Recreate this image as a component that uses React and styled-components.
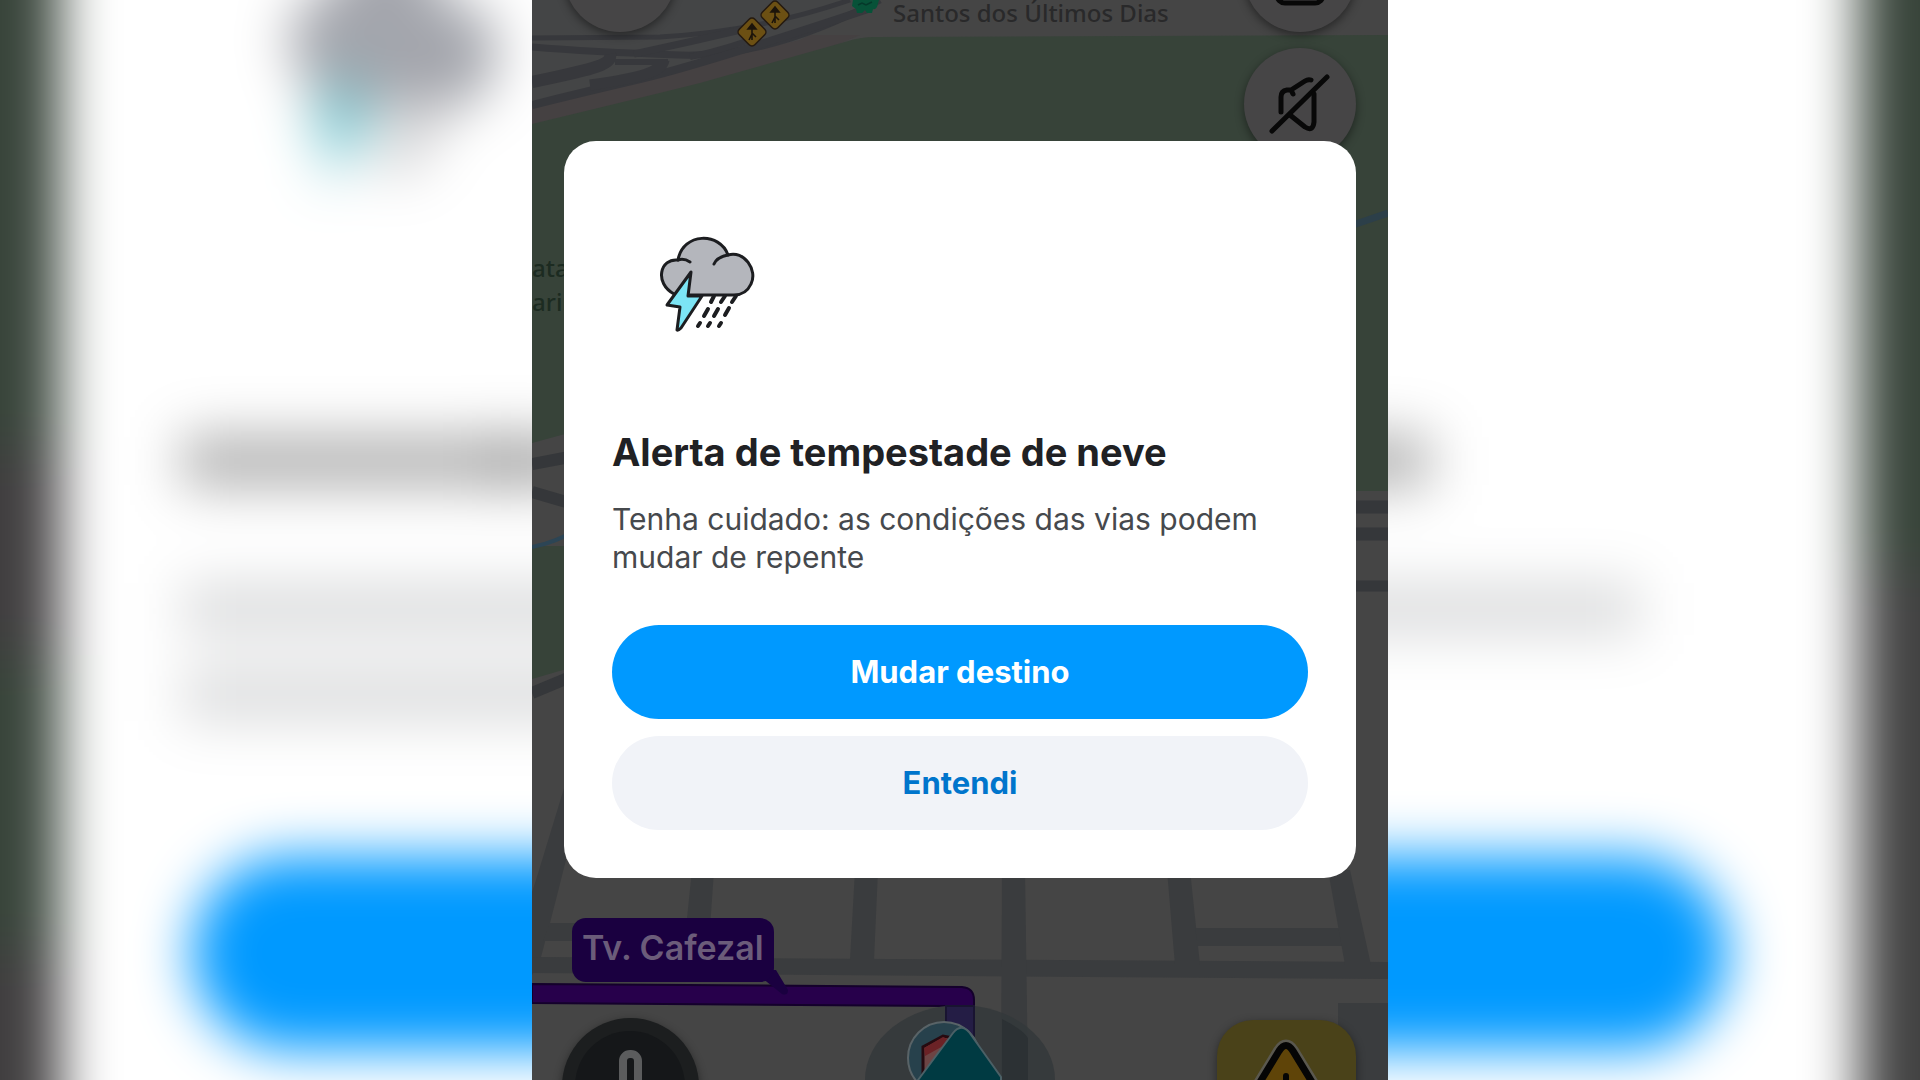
import React from "react";
import styled, { createGlobalStyle } from "styled-components";

const GlobalStyle = createGlobalStyle`
  *, *::before, *::after { box-sizing: border-box; }
  body {
    margin: 0;
    background: #fff;
    font-family: Inter, "Liberation Sans", sans-serif;
  }
`;

const Page = styled.main`
  position: relative;
  display: flex;
  justify-content: center;
  min-height: 100vh;
  overflow: hidden;
`;

const Backdrop = styled.svg`
  position: absolute;
  inset: 0;
  width: 100%;
  height: 100%;
`;

const Blurred = styled.g`
  filter: blur(${(p) => p.$radius}px);
`;

const Phone = styled.section`
  position: relative;
  width: 100%;
  max-width: 856px;
  min-height: 100vh;
  padding: 141px 32px 48px;
  overflow: hidden;
  background: #444544;
`;

const MapDrawing = styled.svg`
  position: absolute;
  top: 0;
  left: 0;
  width: 856px;
  height: 1080px;
`;

const MapLabel = styled.span`
  position: absolute;
  left: ${(p) => p.$x}px;
  top: ${(p) => p.$y}px;
  color: ${(p) => p.$color};
  font: 500 24px/32px "Noto Sans", sans-serif;
  white-space: nowrap;
`;

const StreetTag = styled.span`
  position: absolute;
  left: 40px;
  top: 918px;
  padding: 10px 10px 14px;
  border-radius: 14px;
  background: #1a0040;
  color: #6b5c7a;
  font-size: 34px;
  font-weight: 600;
  line-height: 40px;
  white-space: nowrap;
`;

const MapButton = styled.button`
  position: absolute;
  left: ${(p) => p.$x}px;
  top: ${(p) => p.$y}px;
  width: ${(p) => p.$size}px;
  height: ${(p) => p.$size}px;
  padding: 0;
  border: 0;
  border-radius: ${(p) => p.$radius || "50%"};
  background: ${(p) => p.$fill || "#464546"};
  box-shadow: 0 3px 10px rgba(0, 0, 0, 0.45);

  svg {
    display: block;
    width: 100%;
    height: 100%;
  }
`;

const Dialog = styled.div`
  position: relative;
  display: flex;
  flex-direction: column;
  padding: 48px;
  border-radius: 32px;
  background: #fff;
`;

const StormIcon = styled.svg`
  width: 192px;
  height: 192px;
`;

const Title = styled.h1`
  margin: 47px 0 0;
  color: #202124;
  font-size: 38px;
  font-weight: 700;
  line-height: 48px;
`;

const Message = styled.p`
  margin: 24px 0 0;
  color: #46494d;
  font-size: 30px;
  line-height: 38px;
`;

const Actions = styled.div`
  display: flex;
  flex-direction: column;
  gap: 17px;
  margin-top: 49px;
`;

const Action = styled.button`
  height: 94px;
  border: 0;
  border-radius: 47px;
  background: ${(p) => (p.$primary ? "#0099ff" : "#f1f3f8")};
  color: ${(p) => (p.$primary ? "#ffffff" : "#0075cc")};
  font-family: inherit;
  font-size: 31px;
  font-weight: 700;
  line-height: 40px;
  cursor: pointer;
`;

function BlurredBackdrop() {
  return (
    <Backdrop viewBox="0 0 1920 1080" preserveAspectRatio="xMidYMid slice" aria-hidden="true">
      <Blurred $radius={27}>
        <rect x="-200" y="-200" width="2320" height="1500" fill="#38443a" />
        <rect x="-200" y="450" width="500" height="205" fill="#403e3f" />
        <rect x="-200" y="950" width="500" height="400" fill="#403e3f" />
        <rect x="1700" y="570" width="500" height="800" fill="#424242" />
        <rect x="60" y="-200" width="1800" height="1600" fill="#fff" />
        <path d="M289 50 Q289 0 330 -10 Q350 -60 390 -60 Q430 -60 448 5 Q497 0 497 55 Q492 106 450 106 H320 Z" fill="#a3a5ac" />
        <path d="M400 100 H465 L415 175 H370 Z" fill="#d6d6d8" />
        <path d="M358 55 L302 130 L330 134 L324 190 L382 108 H350 Z" fill="#74c6d0" />
        <rect x="182" y="435" width="330" height="52" fill="#000" opacity=".31" />
        <rect x="500" y="435" width="930" height="52" fill="#000" opacity=".31" />
        <rect x="182" y="582" width="1458" height="54" fill="#3c4448" opacity=".18" />
        <rect x="182" y="668" width="460" height="54" fill="#3c4448" opacity=".18" />
        <rect x="192" y="856" width="1536" height="194" rx="97" fill="#0099ff" />
      </Blurred>
    </Backdrop>
  );
}

function LaneSign({ x, y }) {
  return (
    <g transform={`translate(${x} ${y})`}>
      <rect x="-11" y="-11" width="22" height="22" rx="4" transform="rotate(45)" fill="#6c5013" stroke="#251a10" strokeWidth="1.5" />
      <path d="M0 8 V-7 M-4 -3 L0 -8 L4 -3 Z M0 1 L4 5 M0 2 L-3 8" fill="#1c140b" stroke="#1c140b" strokeWidth="1.6" />
    </g>
  );
}

function RoadMap() {
  return (
    <MapDrawing viewBox="532 0 856 1080" aria-hidden="true">
      <rect x="532" width="856" height="1080" fill="#454545" />

      {/* highway junction */}
      <path d="M532 35 H860 L800 60 L640 99 L532 124 Z" fill="#454142" />
      <path d="M532 0 H880 L800 40 L660 72 L532 106 Z" fill="#444546" />
      <g fill="none" stroke="#37383c">
        <path d="M532 38 L660 37 Q760 31 850 0" strokeWidth="5" />
        <path d="M532 47 Q590 52 680 55 T880 0" strokeWidth="7" />
        <path d="M532 82 C600 68 612 64 610 54" strokeWidth="12" />
        <path d="M532 105 Q580 93 640 79 T868 9" strokeWidth="8" />
        <path d="M590 85 C640 78 662 72 664 60" strokeWidth="11" />
        <path d="M634 54 Q690 42 745 29" strokeWidth="7" />
        <path d="M690 57 Q730 48 760 36" strokeWidth="6" />
        <path d="M615 62 H668" strokeWidth="6" />
      </g>

      {/* parks */}
      <path d="M532 124 Q640 98 700 83 L845 42 Q860 37 875 37 L1388 35 V491 H1340 L565 434 L532 443 Z" fill="#374339" />
      <path d="M532 546 L580 546 V665 L532 679 Z" fill="#374339" />
      <path d="M1350 226 L1388 213" stroke="#2c3f49" strokeWidth="7" />
      <path d="M532 547 Q555 543 580 528" fill="none" stroke="#2c4555" strokeWidth="4" />

      {/* roads either side of the dialog */}
      <g fill="none" stroke="#35373a">
        <path d="M532 464 L580 455" strokeWidth="12" />
        <path d="M532 492 L580 506" strokeWidth="12" />
        <path d="M532 693 L580 673" strokeWidth="12" />
        <path d="M1340 507 H1388 M1340 534 H1388" strokeWidth="13" />
        <path d="M1340 586 H1388" strokeWidth="11" />
      </g>

      {/* street grid */}
      <g fill="#3a3c3e">
        <path d="M565 785 L536 880 L532 892 V975 L541 957 L550 923 L566 860 Z" />
        <path d="M532 957 L1388 962 V979 L532 973 Z" />
        <path d="M550 923 H690 V941 H543 Z" />
        <path d="M692 870 H714 L708 957 H683 Z" />
        <path d="M855 870 H878 L874 960 H850 Z" />
        <path d="M1002 870 H1025 L1028 1080 H1001 Z" />
        <path d="M1167 870 H1190 L1200 965 H1175 Z" />
        <path d="M1195 928 H1345 V946 H1198 Z" />
        <path d="M1328 870 H1350 L1371 965 H1345 Z" />
        <path d="M1338 1003 H1388 V1080 H1338 Z" />
      </g>

      {/* green rider marker */}
      <path d="M853 0 H879 L877 7 Q875 10 873 9 L872 13 H867 L865 10 L862 13 H857 L856 9 L852 6 Z" fill="#075238" />
      <path d="M858 5 L862 3 L866 5 L872 2" fill="none" stroke="#05392a" strokeWidth="1.5" />
      <LaneSign x={775} y={15} />
      <LaneSign x={752} y={32} />

      {/* route and current position */}
      <path d="M532 984 L962 987 Q974 988 974 1000 V1050 H946 V1006 L532 1003 Z" fill="#27004b" stroke="#14002b" strokeWidth="2" />
      <path d="M765 970 L776 970 L788 990 Q788 996 782 994 L762 978 Z" fill="#1a0040" />
      <ellipse cx="960" cy="1080" rx="95" ry="75" fill="#34383b" opacity=".85" />
      <path d="M1002 1019 Q1022 1029 1028 1038 V1080 H1002 Z" fill="#2c3134" />
      <path d="M946 1006 H974 V1045 H946 Z" fill="#241d45" stroke="#191431" strokeWidth="2" />
      <circle cx="944" cy="1058" r="36" fill="#27414c" stroke="#596367" strokeWidth="2" />
      <path d="M923 1080 V1047 L943 1036 L953 1038 V1066 Z" fill="#6d4444" stroke="#260a10" strokeWidth="3" />
      <path d="M924 1048 L943 1037 L952 1041 L925 1056 Z" fill="#6b2226" />
      <path d="M918 1080 L953 1033 Q961 1023 969 1032 L1001 1077 V1084 H918 Z" fill="#003a42" stroke="#4b6066" strokeWidth="2" />
    </MapDrawing>
  );
}

export default function App() {
  return (
    <>
      <GlobalStyle />
      <Page>
        <BlurredBackdrop />
        <Phone>
          <RoadMap />
          <MapLabel $x={361} $y={-3} $color="#29292a">Santos dos Últimos Dias</MapLabel>
          <MapLabel $x={0} $y={252} $color="#1c2b21">ata</MapLabel>
          <MapLabel $x={0} $y={286} $color="#1c2b21">arin</MapLabel>
          <StreetTag>Tv. Cafezal</StreetTag>

          <MapButton $x={32} $y={-80} $size={112} aria-label="Menu" />
          <MapButton $x={712} $y={-80} $size={112} aria-label="Relatórios">
            <svg viewBox="0 0 112 112" fill="none">
              <rect x="33" y="46" width="46" height="37" rx="8" stroke="#080808" strokeWidth="5" />
            </svg>
          </MapButton>
          <MapButton $x={712} $y={48} $size={112} aria-label="Som desativado">
            <svg viewBox="0 0 112 112" fill="none" stroke="#080808" strokeWidth="5" strokeLinecap="round" strokeLinejoin="round">
              <path d="M28 83 L83 29" />
              <path d="M37 64 V49 Q37 43 43 42 H47 L61 33 Q64 31 67 32 M47 42 L49 46" />
              <path d="M70 46 V74 Q69 84 61 79 L46 67" />
            </svg>
          </MapButton>
          <MapButton $x={30} $y={1018} $size={137} $fill="#1c1e1f" aria-label="Velocidade">
            <svg viewBox="0 0 137 137" fill="none">
              <circle cx="68" cy="68" r="55" fill="#151719" />
              <rect x="61" y="36" width="15" height="60" rx="7" stroke="#5b5c5d" strokeWidth="8" />
            </svg>
          </MapButton>
          <MapButton $x={685} $y={1020} $size={139} $radius="36px" $fill="#4a4219" aria-label="Avisar">
            <svg viewBox="0 0 139 139" fill="none" strokeLinejoin="round">
              <path d="M62 31 Q69 20 76 31 L112 90 H26 Z" stroke="#5a584f" strokeWidth="12" />
              <path d="M62 31 Q69 20 76 31 L112 90 H26 Z" fill="#5f4408" stroke="#050505" strokeWidth="7" />
              <path d="M69 56 V76" stroke="#050505" strokeWidth="6" strokeLinecap="round" />
            </svg>
          </MapButton>

          <Dialog role="dialog" aria-labelledby="alert-title" aria-describedby="alert-message">
            <StormIcon viewBox="612 189 192 192" fill="none" stroke="#1c1d20" strokeWidth="3" strokeLinecap="round" strokeLinejoin="round" aria-hidden="true">
              <path d="M674 294 C654 283 660 258 678 260 C683 232 720 232 728 255 C744 250 758 270 751 284 Q746 295 734 295 H689 Z" fill="#b4b6bc" />
              <path d="M678 260 Q684 258 690 262 M714 264 Q717 257 728 255" />
              <path d="M691 272 L667 305 L680 307 L677 330 Q678 331 681 328 L702 296 H688 Z" fill="#7ce5f5" />
              <path d="M714 296 L711 302 M725 296 L721 302 M736 296 L732 302" strokeWidth="4" />
              <path d="M708 309 L704 316 M718 309 L714 316 M729 308 L725 315" strokeWidth="4" />
              <path d="M700 323 L698 326 M710 323 L708 326 M721 323 L719 326" strokeWidth="4" />
            </StormIcon>
            <Title id="alert-title">Alerta de tempestade de neve</Title>
            <Message id="alert-message">Tenha cuidado: as condições das vias podem mudar de repente</Message>
            <Actions>
              <Action type="button" $primary>Mudar destino</Action>
              <Action type="button">Entendi</Action>
            </Actions>
          </Dialog>
        </Phone>
      </Page>
    </>
  );
}
